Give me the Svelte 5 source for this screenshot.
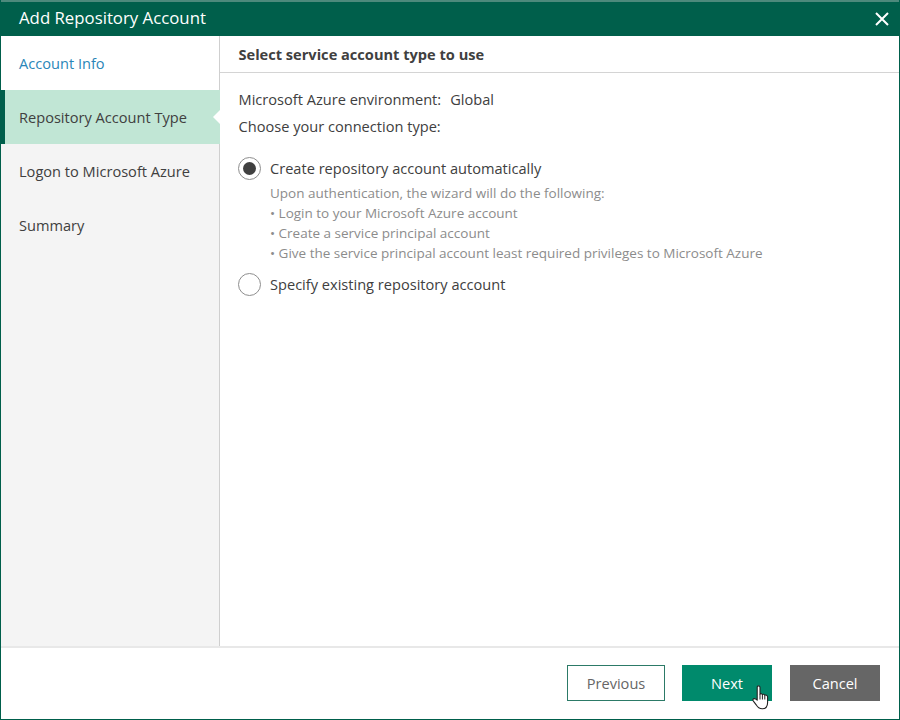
<script>
  const steps = [
    { label: 'Account Info', state: 'done' },
    { label: 'Repository Account Type', state: 'active' },
    { label: 'Logon to Microsoft Azure', state: '' },
    { label: 'Summary', state: '' }
  ];
  const bullets = [
    'Login to your Microsoft Azure account',
    'Create a service principal account',
    'Give the service principal account least required privileges to Microsoft Azure'
  ];
</script>

<div class="dialog">
  <header class="titlebar">
    <span class="title">Add Repository Account</span>
    <svg class="close" width="14" height="14" viewBox="0 0 14 14" aria-hidden="true">
      <path d="M1 1 L13 13 M13 1 L1 13" stroke="#fff" stroke-width="2" fill="none" />
    </svg>
  </header>
  <div class="body">
    <nav class="sidebar">
      {#each steps as s}
        <div class="step {s.state}">{s.label}</div>
      {/each}
    </nav>
    <main class="main">
      <div class="heading">Select service account type to use</div>
      <div class="content">
        <div class="line env"><span>Microsoft Azure environment:</span><span>Global</span></div>
        <div class="line choose">Choose your connection type:</div>
        <div class="radio first">
          <span class="dot checked"></span>
          <span>Create repository account automatically</span>
        </div>
        <div class="desc">
          <div>Upon authentication, the wizard will do the following:</div>
          {#each bullets as b}
            <div>• {b}</div>
          {/each}
        </div>
        <div class="radio second">
          <span class="dot"></span>
          <span>Specify existing repository account</span>
        </div>
      </div>
    </main>
  </div>
  <footer class="footer">
    <button class="btn prev">Previous</button>
    <div class="next-wrap">
      <button class="btn next">Next</button>
      <svg class="cursor" width="18" height="25" viewBox="0 0 18 25" aria-hidden="true">
        <path d="M5.6 1.2 C6.6 .4 8 1 8 2.4 V9 C8.8 8.4 10 8.6 10.4 9.6 C11.3 9 12.4 9.3 12.8 10.2 C13.8 9.8 15.6 10.4 15.6 12 V17.5 C15.6 21 14 23.8 10.2 23.8 C6.8 23.8 5.4 22 4.2 19.8 L1.2 15.8 C.5 14.8 1.1 13.7 2.2 13.6 C3.2 13.5 4.2 14.2 5.2 15.2 V2.6 C5.2 2 5.3 1.5 5.6 1.2 Z" fill="#fff" stroke="#222" stroke-width="1.1" stroke-linejoin="round" />
        <path d="M8 9 V14.5 M10.4 9.6 V14.5 M12.8 10.2 V14.5" stroke="#222" stroke-width="1" fill="none" />
      </svg>
    </div>
    <button class="btn cancel">Cancel</button>
  </footer>
</div>

<style>
  :global(body) {
    margin: 0;
    background: #fff;
  }
  .dialog {
    width: 900px;
    height: 720px;
    box-sizing: border-box;
    border: 1px solid #005f4b;
    border-top: none;
    display: flex;
    flex-direction: column;
    font-family: "Open Sans", "Liberation Sans", sans-serif;
    font-size: 14.6px;
    color: #404040;
    overflow: hidden;
  }
  .titlebar {
    height: 36px;
    box-sizing: border-box;
    flex: none;
    margin: 0 -1px;
    padding: 0 11px 0 19px;
    background: #005f4b;
    border-top: 2px solid #4d8a7c;
    display: flex;
    align-items: center;
    justify-content: space-between;
    color: #fff;
    font-size: 16.8px;
  }
  .title {
    position: relative;
    top: -2px;
  }
  .close {
    display: block;
  }
  .body {
    flex: 1;
    display: flex;
    min-height: 0;
  }
  .sidebar {
    width: 219px;
    box-sizing: border-box;
    flex: none;
    background: #f4f4f4;
    border-right: 1px solid #cfcfcf;
  }
  .step {
    height: 54px;
    box-sizing: border-box;
    padding-left: 18px;
    display: flex;
    align-items: center;
    position: relative;
  }
  .step.done {
    background: #fff;
    color: #2a86b8;
  }
  .step.active {
    background: #c1e6d5;
    border-left: 4px solid #005f4b;
    padding-left: 14px;
    margin-right: -1px;
  }
  .step.active::after {
    content: "";
    position: absolute;
    right: 0;
    top: 50%;
    margin-top: -7px;
    border: 7px solid transparent;
    border-right-color: #fff;
    border-left-width: 0;
  }
  .main {
    flex: 1;
    min-width: 0;
    background: #fff;
  }
  .heading {
    height: 37px;
    box-sizing: border-box;
    padding-left: 18.5px;
    display: flex;
    align-items: center;
    font-weight: 700;
    border-bottom: 1px solid #d4d4d4;
  }
  .content {
    padding: 16px 18px 0;
  }
  .line {
    height: 20px;
    line-height: 20px;
    padding-left: 0.5px;
  }
  .env {
    display: flex;
    gap: 9px;
  }
  .choose {
    margin-top: 7px;
  }
  .radio {
    display: flex;
    align-items: center;
    gap: 9px;
    height: 24px;
  }
  .radio.first {
    margin-top: 20px;
  }
  .radio.second {
    margin-top: 9px;
  }
  .dot {
    width: 23px;
    height: 23px;
    box-sizing: border-box;
    border: 1.5px solid #8e8e8e;
    border-radius: 50%;
    background: #fff;
    display: flex;
    align-items: center;
    justify-content: center;
    flex: none;
  }
  .dot.checked::after {
    content: "";
    width: 13px;
    height: 13px;
    border-radius: 50%;
    background: #404040;
  }
  .desc {
    margin: 3px 0 0 32px;
    color: #8c8c8c;
    font-size: 13.5px;
    line-height: 20px;
  }
  .footer {
    height: 73px;
    box-sizing: border-box;
    flex: none;
    border-top: 2px solid #e8e8e8;
    background: #fff;
    padding: 17px 19px 0 0;
    display: flex;
    justify-content: flex-end;
    align-items: flex-start;
  }
  .btn {
    height: 36px;
    width: 90px;
    box-sizing: border-box;
    border: none;
    padding: 0;
    font: inherit;
    color: #fff;
    display: block;
  }
  .prev {
    width: 98px;
    background: #fff;
    border: 1px solid #2c7a67;
    color: #666;
  }
  .next {
    background: #008a6c;
  }
  .cancel {
    background: #666;
    margin-left: 18px;
  }
  .next-wrap {
    position: relative;
    margin-left: 17px;
  }
  .cursor {
    position: absolute;
    left: 70px;
    top: 20px;
  }
</style>
